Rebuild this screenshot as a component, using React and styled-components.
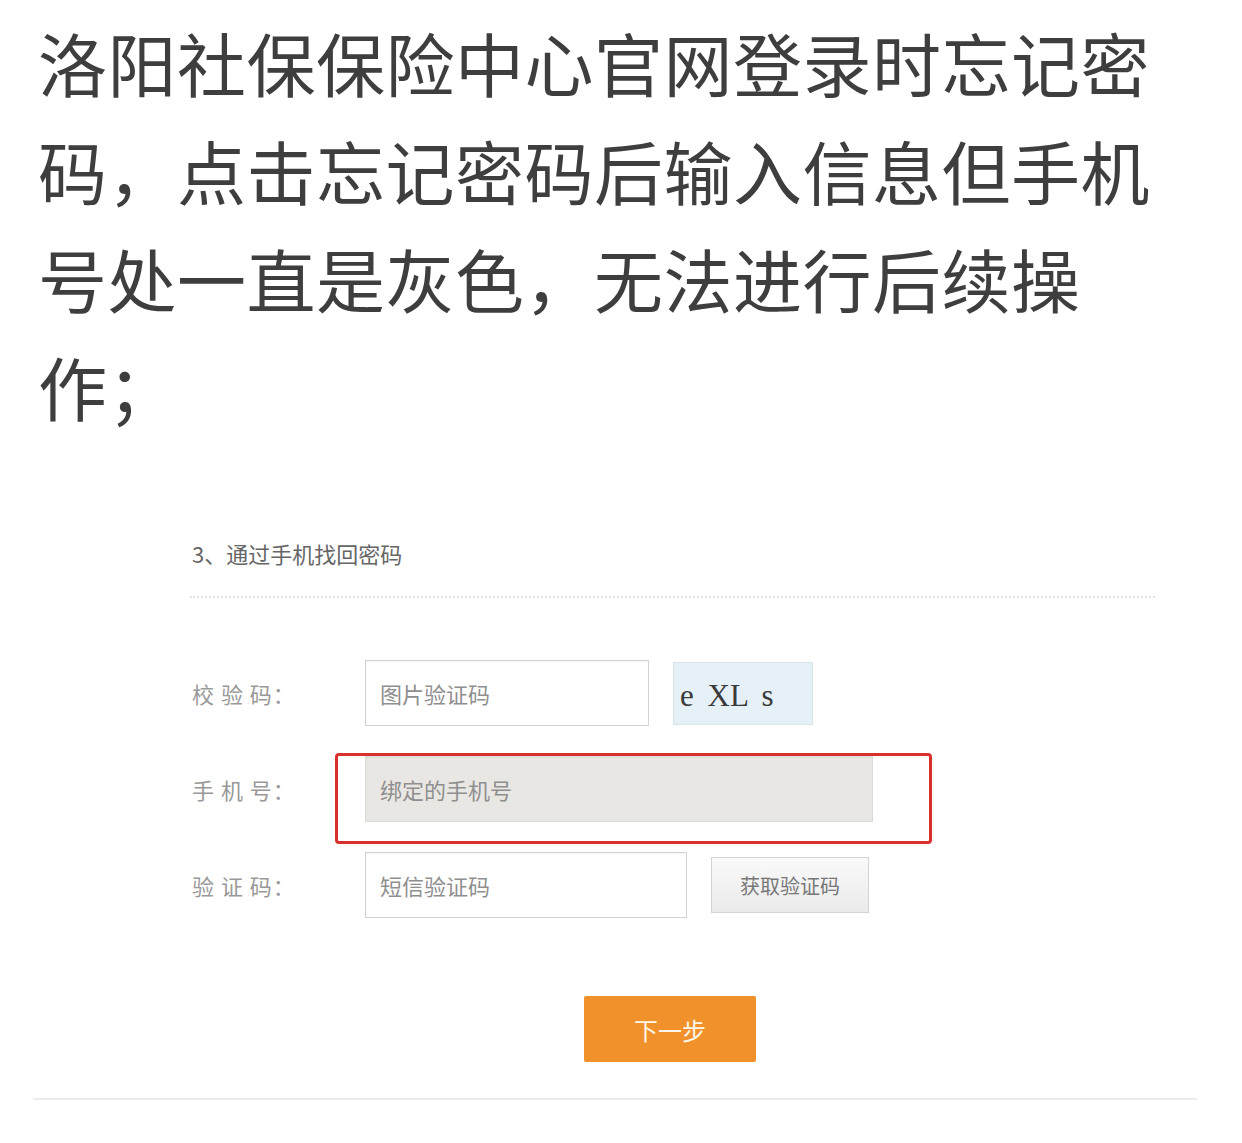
import React from "react";
import styled, { createGlobalStyle } from "styled-components";

const GlobalStyle = createGlobalStyle`
  body {
    margin: 0;
    background: #ffffff;
    font-family: "Noto Sans CJK SC", "Noto Sans", sans-serif;
  }
`;

const rows = [
  { label: "校 验 码：", placeholder: "图片验证码", kind: "captcha" },
  { label: "手 机 号：", placeholder: "绑定的手机号", kind: "phone" },
  { label: "验 证 码：", placeholder: "短信验证码", kind: "sms" },
];

const App = () => (
  <>
    <GlobalStyle />
    <Page>
      <Question>
        洛阳社保保险中心官网登录时忘记密码，点击忘记密码后输入信息但手机号处一直是灰色，无法进行后续操作；
      </Question>
      <Form>
        <StepTitle>3、通过手机找回密码</StepTitle>
        <Dotted />
        <Rows>
          {rows.map((row) => (
            <Row key={row.label}>
              <Label>{row.label}</Label>
              <Fields>
                <Field $kind={row.kind}>{row.placeholder}</Field>
                {row.kind === "captcha" && (
                  <Captcha>
                    <CaptchaText>e XL s</CaptchaText>
                  </Captcha>
                )}
                {row.kind === "sms" && <SendButton>获取验证码</SendButton>}
                {row.kind === "phone" && <Highlight />}
              </Fields>
            </Row>
          ))}
        </Rows>
        <NextButton>下一步</NextButton>
      </Form>
      <BottomRule />
    </Page>
  </>
);

const Page = styled.div`
  padding: 8px 45px 0 33px;
`;

const Question = styled.div`
  padding-left: 5px;
  width: 1160px;
  font-size: 69px;
  letter-spacing: 0.5px;
  line-height: 108px;
  color: #3e3e3e;
`;

const Form = styled.div`
  margin: 98px 0 0 157px;
  width: 965px;
  display: flex;
  flex-direction: column;
`;

const StepTitle = styled.div`
  font-size: 22px;
  line-height: 30px;
  color: #666666;
  margin-left: 2px;
`;

const Dotted = styled.div`
  margin-top: 28px;
  border-top: 2px dotted #e3e3e3;
`;

const Rows = styled.div`
  margin-top: 47px;
  display: flex;
  flex-direction: column;
`;

const Row = styled.div`
  display: grid;
  grid-template-columns: 175px 1fr;
  align-items: center;
  height: 96px;
`;

const Label = styled.div`
  font-size: 22px;
  color: #999999;
  letter-spacing: 1px;
  margin-left: 2px;
`;

const Fields = styled.div`
  position: relative;
  display: flex;
  align-items: center;
  gap: 24px;
  height: 100%;
`;

const Field = styled.div`
  box-sizing: border-box;
  height: 66px;
  width: ${(p) => (p.$kind === "phone" ? "508px" : p.$kind === "sms" ? "322px" : "284px")};
  border: 1px solid ${(p) => (p.$kind === "phone" ? "#dcdad6" : "#d2d2d2")};
  background: ${(p) => (p.$kind === "phone" ? "#e9e7e3" : "#ffffff")};
  padding-left: 14px;
  display: flex;
  align-items: center;
  font-size: 22px;
  color: #8f8f8f;
  box-shadow: inset 0 1px 2px rgba(0, 0, 0, 0.04);
`;

const Captcha = styled.div`
  box-sizing: border-box;
  width: 140px;
  height: 63px;
  background: #e5f1f7;
  border: 1px solid #d6e4ec;
  padding: 6px 0 0 6px;
  display: flex;
  align-items: center;
`;

const CaptchaText = styled.span`
  font-family: "Liberation Serif", serif;
  font-size: 31px;
  color: #3a3a3a;
  word-spacing: 6px;
`;

const SendButton = styled.div`
  box-sizing: border-box;
  width: 158px;
  height: 56px;
  border: 1px solid #d4d4d4;
  background: linear-gradient(#fafafa, #eaeaea);
  display: flex;
  align-items: center;
  justify-content: center;
  font-size: 20px;
  color: #777777;
`;

const Highlight = styled.div`
  position: absolute;
  left: -30px;
  top: 12px;
  width: 597px;
  height: 91px;
  box-sizing: border-box;
  border: 3px solid #d8302c;
  border-radius: 4px;
`;

const NextButton = styled.div`
  align-self: flex-start;
  margin: 63px 0 0 394px;
  width: 172px;
  height: 66px;
  border-radius: 2px;
  background: #f0912b;
  display: flex;
  align-items: center;
  justify-content: center;
  font-size: 24px;
  color: #fff6e8;
`;

const BottomRule = styled.div`
  margin-top: 36px;
  width: 1164px;
  border-top: 2px solid #ececec;
`;

export default App;
